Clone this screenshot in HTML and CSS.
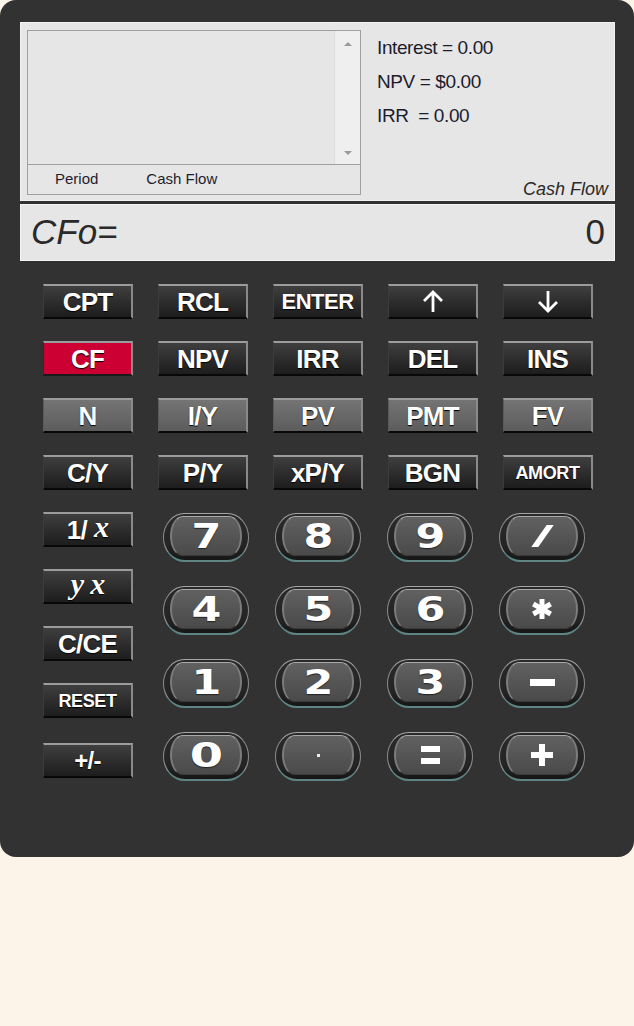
FILE: index.html
```html
<!DOCTYPE html>
<html>
<head>
<meta charset="utf-8">
<link rel="stylesheet" href="styles.css">
</head>
<body>
<div class="calc">
  <div class="panel">
    <div class="listbox">
      <div class="listarea">
        <div class="listbody"></div>
        <div class="scroll">
          <span class="tri up"></span>
          <span class="tri down"></span>
        </div>
      </div>
      <div class="listhead">
        <span class="h-period">Period</span>
        <span class="h-cash">Cash Flow</span>
      </div>
    </div>
    <div class="results">
      <div class="line">Interest = 0.00</div>
      <div class="line">NPV = $0.00</div>
      <div class="line">IRR&nbsp; = 0.00</div>
      <div class="mode">Cash Flow</div>
    </div>
  </div>
  <div class="display">
    <span class="dlabel">CFo=</span>
    <span class="dvalue">0</span>
  </div>

  <div class="keypad">
    <div class="fnrows">
      <div class="fn">CPT</div>
      <div class="fn">RCL</div>
      <div class="fn sm">ENTER</div>
      <div class="fn"><svg width="24" height="23" viewBox="0 0 24 23"><path d="M12 22V2M3 11L12 2L21 11" fill="none" stroke="#fff" stroke-width="2.8"/></svg></div>
      <div class="fn"><svg width="24" height="23" viewBox="0 0 24 23"><path d="M12 1V21M3 12L12 21L21 12" fill="none" stroke="#fff" stroke-width="2.8"/></svg></div>

      <div class="fn red">CF</div>
      <div class="fn">NPV</div>
      <div class="fn">IRR</div>
      <div class="fn">DEL</div>
      <div class="fn">INS</div>

      <div class="fn gray">N</div>
      <div class="fn gray">I/Y</div>
      <div class="fn gray">PV</div>
      <div class="fn gray">PMT</div>
      <div class="fn gray">FV</div>

      <div class="fn">C/Y</div>
      <div class="fn">P/Y</div>
      <div class="fn">xP/Y</div>
      <div class="fn">BGN</div>
      <div class="fn xs">AMORT</div>
    </div>

    <div class="lower">
      <div class="leftcol">
        <div class="fn">1/<i class="var gap">x</i></div>
        <div class="fn"><i class="var">y</i><i class="var gap">x</i></div>
        <div class="fn">C/CE</div>
        <div class="fn xs">RESET</div>
        <div class="fn pm">+/-</div>
      </div>
      <div class="numgrid">
        <div class="nk"><div class="face"><span class="dg">7</span></div></div>
        <div class="nk"><div class="face"><span class="dg">8</span></div></div>
        <div class="nk"><div class="face"><span class="dg">9</span></div></div>
        <div class="nk"><div class="face"><span class="slash"></span></div></div>

        <div class="nk"><div class="face"><span class="dg">4</span></div></div>
        <div class="nk"><div class="face"><span class="dg">5</span></div></div>
        <div class="nk"><div class="face"><span class="dg">6</span></div></div>
        <div class="nk"><div class="face"><svg width="22" height="22" viewBox="0 0 22 22"><g stroke="#fff" stroke-width="5"><path d="M11 1V21"/><path d="M2.3 6L19.7 16"/><path d="M2.3 16L19.7 6"/></g></svg></div></div>

        <div class="nk"><div class="face"><span class="dg">1</span></div></div>
        <div class="nk"><div class="face"><span class="dg">2</span></div></div>
        <div class="nk"><div class="face"><span class="dg">3</span></div></div>
        <div class="nk"><div class="face"><span class="minus"></span></div></div>

        <div class="nk"><div class="face"><span class="dg zero">0</span></div></div>
        <div class="nk"><div class="face"><span class="dot"></span></div></div>
        <div class="nk"><div class="face"><span class="eq"></span></div></div>
        <div class="nk"><div class="face"><span class="plus"></span></div></div>
      </div>
    </div>
  </div>
</div>
</body>
</html>
```

FILE: styles.css
```css
html, body {
  margin: 0;
  padding: 0;
  background: #fcf3e9;
}

.calc {
  width: 634px;
  height: 857px;
  box-sizing: border-box;
  background: #323232;
  border-radius: 16px;
  padding: 22px 19px 0 20px;
  font-family: "Liberation Sans", Arial, sans-serif;
}

/* ---------- top panel ---------- */
.panel {
  height: 179px;
  box-sizing: border-box;
  background: #e6e6e6;
  border: 1px solid #f2f2f2;
  display: flex;
  padding: 7px 6px 0 6px;
}

.listbox {
  width: 334px;
  height: 165px;
  box-sizing: border-box;
  border: 1px solid #a0a0a0;
  display: flex;
  flex-direction: column;
}

.listarea {
  flex: 1;
  display: flex;
}

.listbody {
  flex: 1;
}

.scroll {
  width: 25px;
  background: #efefef;
  border-left: 1px solid #dcdcdc;
  display: flex;
  flex-direction: column;
  justify-content: space-between;
  align-items: center;
  padding: 11px 0 9px;
}

.tri {
  width: 0;
  height: 0;
  border-left: 4px solid transparent;
  border-right: 4px solid transparent;
}
.tri.up { border-bottom: 4px solid #9a9a9a; }
.tri.down { border-top: 4px solid #9a9a9a; }

.listhead {
  height: 30px;
  box-sizing: border-box;
  border-top: 1px solid #a0a0a0;
  display: flex;
  align-items: center;
  font-size: 15px;
  color: #1e1e2e;
  padding-bottom: 2px;
}
.h-period { margin-left: 27px; }
.h-cash { margin-left: 48px; }

.results {
  flex: 1;
  display: flex;
  flex-direction: column;
  padding-left: 16px;
  padding-top: 1px;
  color: #1c1c2c;
}
.results .line {
  font-size: 19px;
  line-height: 34px;
  letter-spacing: -0.4px;
}
.results .mode {
  margin-top: auto;
  text-align: right;
  font-style: italic;
  font-size: 18px;
  line-height: 20px;
  padding-bottom: 1px;
  color: #2a2a2a;
}

/* ---------- display ---------- */
.display {
  margin-top: 3px;
  height: 57px;
  box-sizing: border-box;
  background: #e6e6e6;
  border: 1px solid #f4f4f4;
  display: flex;
  justify-content: space-between;
  align-items: center;
  padding: 0 9px 2px 10px;
  color: #2a2a2a;
  font-size: 35px;
}
.dlabel { font-style: italic; }

/* ---------- keys ---------- */
.keypad {
  margin-top: 23px;
  margin-left: 23px;
}

.fnrows {
  display: grid;
  grid-template-columns: repeat(5, 90px);
  column-gap: 25px;
  row-gap: 22px;
}

.fn {
  width: 90px;
  height: 35px;
  box-sizing: border-box;
  background: linear-gradient(#3f3f3f, #2a2a2a 60%, #1d1d1d);
  border-top: 2px solid #9c9c9c;
  border-right: 2px solid #8a8a8a;
  border-left: 1px solid #3c3c3c;
  border-bottom: 2px solid #080808;
  color: #fff;
  font-weight: bold;
  font-size: 26px;
  display: flex;
  justify-content: center;
  align-items: center;
  text-shadow: 0 1px 1px #000;
  letter-spacing: -0.8px;
  line-height: 1;
}
.fn.sm { font-size: 22px; letter-spacing: -0.5px; }
.fn.xs { font-size: 18px; letter-spacing: -0.4px; }
.fn.gray {
  background: linear-gradient(#747474, #666 60%, #5c5c5c);
  border-left-color: #5a5a5a;
}
.fn.red {
  background: #cc0033;
  border-top-color: #9c9c9c;
  border-left-color: #8a0022;
  border-bottom-color: #1a1a1a;
}
.fn .var {
  font-family: "Liberation Serif", "Times New Roman", serif;
  font-weight: bold;
  font-size: 30px;
  margin-top: -6px;
}
.fn .var.gap { margin-left: 7px; }
.fn.pm { font-size: 24px; }

.lower {
  display: flex;
  margin-top: 22px;
}

.leftcol {
  display: flex;
  flex-direction: column;
  gap: 22px;
}
.leftcol .pm { margin-top: 3px; }

.numgrid {
  margin-left: 30px;
  margin-top: 1px;
  display: grid;
  grid-template-columns: repeat(4, 86px);
  grid-auto-rows: 49px;
  column-gap: 26px;
  row-gap: 24px;
}

.nk {
  box-sizing: border-box;
  border: 1px solid #8c8c8c;
  border-top-color: #a5a5a5;
  border-bottom: 2px solid #5e8484;
  border-radius: 22px / 25px;
  background: linear-gradient(#2a2a2a, #242424 70%, #161616);
  padding: 2px 6px 4px;
}

.face {
  height: 100%;
  box-sizing: border-box;
  border-radius: 14px / 22px;
  background: linear-gradient(#616161, #555 50%, #4a4a4a);
  border-top: 1px solid #a8a8a8;
  border-left: 2px solid #7c7c7c;
  border-right: 2px solid #7c7c7c;
  border-bottom: 1px solid #3a3a3a;
  display: flex;
  justify-content: center;
  align-items: center;
}

.dg {
  display: inline-block;
  font-family: "DejaVu Sans", sans-serif;
  font-weight: bold;
  font-size: 33px;
  line-height: 1;
  color: #fff;
  transform: scaleX(1.3);
  text-shadow: 0 1px 1px #222;
}
.dg.zero { transform: scaleX(1.45); }

.slash {
  width: 7px;
  height: 22px;
  background: #fff;
  transform: skewX(-35deg);
}
.minus {
  width: 25px;
  height: 7px;
  background: #fff;
}
.dot {
  width: 3px;
  height: 3px;
  background: #eee;
}
.eq {
  width: 19px;
  height: 6px;
  border-top: 6px solid #fff;
  border-bottom: 6px solid #fff;
}
.plus {
  width: 22px;
  height: 22px;
  background:
    linear-gradient(#fff, #fff) center / 6px 22px no-repeat,
    linear-gradient(#fff, #fff) center / 22px 6px no-repeat;
}
```
